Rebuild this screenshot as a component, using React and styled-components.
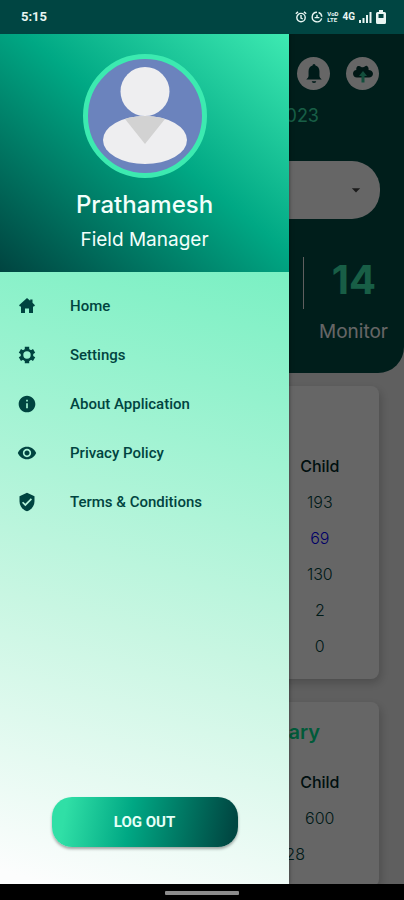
import React from 'react';
import styled, { createGlobalStyle } from 'styled-components';
import { MdArrowDropDown, MdInfo, MdRemoveRedEye, MdVerifiedUser } from 'react-icons/md';

const GlobalStyle = createGlobalStyle`
  * {
    box-sizing: border-box;
  }
  body {
    margin: 0;
    background: #000;
    font-family: Inter, 'Open Sans', sans-serif;
  }
`;

const Screen = styled.div`
  display: flex;
  flex-direction: column;
  height: 100vh;
  overflow: hidden;
`;

const StatusBar = styled.div`
  display: flex;
  flex: none;
  align-items: center;
  justify-content: space-between;
  height: 34px;
  padding: 0 18px 0 21px;
  background: #004542;
  color: #e8f6f3;
`;

const Clock = styled.time`
  font: 700 13px/16px Roboto, sans-serif;
`;

const StatusIcons = styled.div`
  display: flex;
  align-items: center;
  gap: 4px;
`;

const Volte = styled.span`
  display: flex;
  flex-direction: column;
  font: 700 6px/6px Roboto, sans-serif;
`;

const Network = styled.span`
  font: 700 10px/12px Roboto, sans-serif;
`;

const Main = styled.main`
  position: relative;
  flex: 1;
  min-height: 0;
  overflow: hidden;
  background: #eeeeee;
`;

const Hero = styled.header`
  display: flex;
  flex-direction: column;
  height: 339px;
  background: #004b44;
  border-bottom-right-radius: 26px;
`;

const HeroActions = styled.div`
  display: flex;
  justify-content: flex-end;
  gap: 16px;
  padding: 23px 25px 0;
`;

const RoundButton = styled.button`
  display: flex;
  align-items: center;
  justify-content: center;
  width: 33px;
  height: 33px;
  padding: 0;
  border: none;
  border-radius: 50%;
  background: #fff;
  color: #004440;
`;

const HeroDate = styled.div`
  padding: 12px 85px 0;
  font-size: 18px;
  line-height: 28px;
  text-align: right;
  color: #3ceab0;
`;

const SelectWrapper = styled.div`
  display: grid;
  align-items: center;
  margin: 31px 24px 0;

  > * {
    grid-area: 1 / 1;
  }
  svg {
    justify-self: end;
    margin-right: 14px;
    color: #444;
    pointer-events: none;
  }
`;

const Select = styled.select`
  width: 100%;
  height: 58px;
  border: none;
  border-radius: 28px;
  background: #fff;
  appearance: none;
`;

const Stats = styled.div`
  display: grid;
  grid-template-columns: repeat(4, 1fr);
  padding-top: 38px;
`;

const Stat = styled.div`
  display: grid;
  grid-column: 4;
  grid-template-rows: 52px 46px;
  align-items: center;
  text-align: center;
`;

const StatValue = styled.div`
  height: 52px;
  border-left: 1px solid #eee;
  font-size: 40px;
  font-weight: 700;
  line-height: 46px;
  color: #3ceab0;
`;

const StatLabel = styled.div`
  font-size: 19px;
  line-height: 24px;
  color: #fff;
`;

const Cards = styled.div`
  display: flex;
  flex-direction: column;
  gap: 23px;
  padding: 13px 25px 0 24px;
`;

const Card = styled.section`
  padding-bottom: 15px;
  border-radius: 8px;
  background: #fff;
  box-shadow: 2px 4px 10px rgba(0, 0, 0, 0.2);
`;

const CardTitle = styled.div`
  height: 62px;
  padding-right: 59px;
  font-size: 20px;
  font-weight: 600;
  line-height: 60px;
  text-align: right;
  color: #00e090;
`;

const Table = styled.table`
  width: 100%;
  table-layout: fixed;
  border-collapse: collapse;
  color: #004440;
  line-height: 36px;

  th,
  td {
    height: 36px;
    padding: 0;
    text-align: center;
  }
  th {
    font-size: 16px;
    font-weight: 500;
    color: #002a28;
  }
`;

const Value = styled.td`
  font-size: 16px;
  font-weight: 300;
  color: ${(props) => (props.$link ? '#0000ff' : 'inherit')};
`;

const Scrim = styled.div`
  position: absolute;
  inset: 0;
  background: rgba(0, 0, 0, 0.6);
`;

const Drawer = styled.aside`
  position: absolute;
  top: 0;
  bottom: 0;
  left: 0;
  display: flex;
  flex-direction: column;
  width: 289px;
  background: #fff;
  box-shadow: 0 0 4px rgba(0, 0, 0, 0.5);
`;

const Profile = styled.div`
  display: flex;
  flex-direction: column;
  align-items: center;
  padding: 20px 0 16px;
  background: linear-gradient(to top right, #004440, #00a884 54%, #3eeab2);
  color: #f2fffb;
`;

const Avatar = styled.svg`
  display: block;
  width: 124px;
  height: 124px;
  margin-bottom: 11px;
`;

const Name = styled.div`
  margin-bottom: 3px;
  font-size: 24px;
  font-weight: 500;
  line-height: 32px;
`;

const Role = styled.div`
  font-size: 19px;
  line-height: 32px;
`;

const DrawerBody = styled.div`
  display: flex;
  flex: 1;
  flex-direction: column;
  align-items: center;
  justify-content: space-between;
  padding: 9px 0 37px;
  background: linear-gradient(196deg, #7af0c3, #c8f6e2 58%, #fcfdfd 98%);
`;

const Menu = styled.nav`
  display: flex;
  flex-direction: column;
  align-self: stretch;
`;

const MenuLink = styled.a`
  display: flex;
  align-items: center;
  gap: 33px;
  height: 49px;
  padding: 0 17px;
  font: 500 15px/20px Roboto, sans-serif;
  color: #004440;
  text-decoration: none;
`;

const LogoutButton = styled.button`
  width: 186px;
  height: 50px;
  border: none;
  border-radius: 20px;
  background: linear-gradient(100deg, #30dfa6 8%, #00a884 42%, #004742 96%);
  box-shadow: 0 2px 3px rgba(0, 0, 0, 0.35);
  font: 700 15px/20px Roboto, sans-serif;
  color: #e6fff7;
`;

const NavBar = styled.div`
  display: flex;
  flex: none;
  justify-content: center;
  height: 16px;
  padding-top: 7px;
  background: #000;
`;

const NavHandle = styled.div`
  width: 74px;
  height: 4px;
  border-radius: 1px;
  background: #8c8c8c;
`;

const HomeIcon = () => (
  <svg width="20" height="20" viewBox="0 0 20 20" fill="currentColor">
    <path d="M10 2l3.2 2.800V3.500h2.300v3.300L18 9.300l-1 1.200h-1V17h-4v-4.500H8V17H4v-6.500H3L2 9.300z" />
  </svg>
);

const GearIcon = () => (
  <svg width="20" height="20" viewBox="0 0 20 20" fill="none" stroke="currentColor">
    <circle cx="10" cy="10" r="5" strokeWidth="2.600" />
    <g strokeWidth="4.400">
      <path d="M10 1.800v2.800M10 15.400v2.800" />
      <path d="M10 1.800v2.800M10 15.400v2.800" transform="rotate(60 10 10)" />
      <path d="M10 1.800v2.800M10 15.400v2.800" transform="rotate(120 10 10)" />
    </g>
  </svg>
);

const menuItems = [
  { label: 'Home', Icon: HomeIcon },
  { label: 'Settings', Icon: GearIcon },
  { label: 'About Application', Icon: MdInfo },
  { label: 'Privacy Policy', Icon: MdRemoveRedEye },
  { label: 'Terms & Conditions', Icon: MdVerifiedUser },
];

const childCounts = [
  { value: 193 },
  { value: 69, link: true },
  { value: 130 },
  { value: 2 },
  { value: 0 },
];

const AlarmIcon = () => (
  <svg width="12" height="12" viewBox="0 0 12 12" fill="none" stroke="currentColor" strokeWidth="1.4">
    <circle cx="6" cy="6.6" r="4.2" />
    <path d="M6 4v3l1.8 1M.8 2.8 3 .9M11.2 2.8 9 .9" />
  </svg>
);

const DataSaverIcon = () => (
  <svg width="12" height="12" viewBox="0 0 12 12" fill="none" stroke="currentColor" strokeWidth="1.4">
    <path d="M6 1.2a4.8 4.8 0 1 0 4.6 6.2M7.6 1.5a4.8 4.8 0 0 1 3.2 4.2M3.6 6.6h4.8M6 3.8v2.8" />
  </svg>
);

const SignalIcon = () => (
  <svg width="13" height="12" viewBox="0 0 13 12" fill="currentColor">
    <path d="M0 9h2v3H0zM3.5 7h2v5h-2zM7 4h2v8H7zM10.5 1h2v11h-2z" />
  </svg>
);

const BatteryIcon = () => (
  <svg width="10" height="14" viewBox="0 0 10 14">
    <path
      d="M3 0h4v2h1.5A1.5 1.5 0 0 1 10 3.5v9A1.5 1.5 0 0 1 8.5 14h-7A1.5 1.5 0 0 1 0 12.5v-9A1.5 1.5 0 0 1 1.5 2H3z"
      fill="currentColor"
    />
    <path d="M2.5 4h5v4h-5z" fill="#004542" />
  </svg>
);

const BellIcon = () => (
  <svg width="20" height="22" viewBox="0 0 22 24" fill="currentColor">
    <path d="M11 1a1.6 1.6 0 0 1 1.6 1.7C15.4 3.4 17 5.8 17 9v5c0 1.6 1 2.6 2.5 4H2.5C4 16.6 5 15.6 5 14V9c0-3.2 1.6-5.6 4.4-6.3A1.6 1.6 0 0 1 11 1z" />
    <path d="M8.5 20h5a2.5 2 0 0 1-5 0z" />
  </svg>
);

const CloudUploadIcon = () => (
  <svg width="22" height="20" viewBox="0 0 22 20">
    <path
      d="M5 13.5A4 4 0 0 1 1 9.8C1 7.5 2.5 6 4.3 6 4 3.5 5 1.5 7 2c1.5.4 2.5 1.5 4 1.3 1.6-.2 2.6-2 4-1.3 1.5.8 1.7 2.3 1.6 4C19 6 21 7.5 21 9.8s-1.8 3.7-4 3.7z"
      fill="#003a36"
    />
    <path d="M11 7l4 5h-2.5v6.5h-3V12H7z" fill="#30c496" />
  </svg>
);

const UserAvatar = () => (
  <Avatar viewBox="0 0 124 124" role="img" aria-label="Profile picture">
    <defs>
      <clipPath id="shoulders">
        <ellipse cx="62" cy="86" rx="42" ry="24" />
      </clipPath>
    </defs>
    <circle cx="62" cy="62" r="59.5" fill="#6b83bd" stroke="#3ceab0" strokeWidth="5" />
    <ellipse cx="62" cy="86" rx="42" ry="24" fill="#eeeef0" />
    <path d="M38 60h48L62 90z" fill="#d2d2d2" clipPath="url(#shoulders)" />
    <circle cx="62" cy="37.5" r="24.5" fill="#eeeef0" />
  </Avatar>
);

const Dashboard = () => (
  <>
    <Hero>
      <HeroActions>
        <RoundButton aria-label="Notifications">
          <BellIcon />
        </RoundButton>
        <RoundButton aria-label="Upload">
          <CloudUploadIcon />
        </RoundButton>
      </HeroActions>
      <HeroDate>2023</HeroDate>
      <SelectWrapper>
        <Select aria-label="Centre" />
        <MdArrowDropDown size={20} />
      </SelectWrapper>
      <Stats>
        <Stat>
          <StatValue>14</StatValue>
          <StatLabel>Monitor</StatLabel>
        </Stat>
      </Stats>
    </Hero>
    <Cards>
      <Card>
        <CardTitle />
        <Table>
          <thead>
            <tr>
              <td colSpan={8} />
              <th colSpan={4}>Child</th>
            </tr>
          </thead>
          <tbody>
            {childCounts.map(({ value, link }) => (
              <tr key={value}>
                <td colSpan={8} />
                <Value colSpan={4} $link={link}>
                  {value}
                </Value>
              </tr>
            ))}
          </tbody>
        </Table>
      </Card>
      <Card>
        <CardTitle>Summary</CardTitle>
        <Table>
          <thead>
            <tr>
              <td colSpan={8} />
              <th colSpan={4}>Child</th>
            </tr>
          </thead>
          <tbody>
            <tr>
              <td colSpan={8} />
              <Value colSpan={4}>600</Value>
            </tr>
            <tr>
              <td colSpan={7} />
              <Value colSpan={4}>228</Value>
              <td />
            </tr>
          </tbody>
        </Table>
      </Card>
    </Cards>
  </>
);

const SideDrawer = () => (
  <Drawer>
    <Profile>
      <UserAvatar />
      <Name>Prathamesh</Name>
      <Role>Field Manager</Role>
    </Profile>
    <DrawerBody>
      <Menu>
        {menuItems.map(({ label, Icon }) => (
          <MenuLink href="#" key={label}>
            <Icon size={20} />
            {label}
          </MenuLink>
        ))}
      </Menu>
      <LogoutButton>LOG OUT</LogoutButton>
    </DrawerBody>
  </Drawer>
);

const App = () => {
  return (
    <Screen>
      <GlobalStyle />
      <StatusBar>
        <Clock>5:15</Clock>
        <StatusIcons>
          <AlarmIcon />
          <DataSaverIcon />
          <Volte>
            <span>VoD</span>
            <span>LTE</span>
          </Volte>
          <Network>4G</Network>
          <SignalIcon />
          <BatteryIcon />
        </StatusIcons>
      </StatusBar>
      <Main>
        <Dashboard />
        <Scrim />
        <SideDrawer />
      </Main>
      <NavBar>
        <NavHandle />
      </NavBar>
    </Screen>
  );
};

export default App;
